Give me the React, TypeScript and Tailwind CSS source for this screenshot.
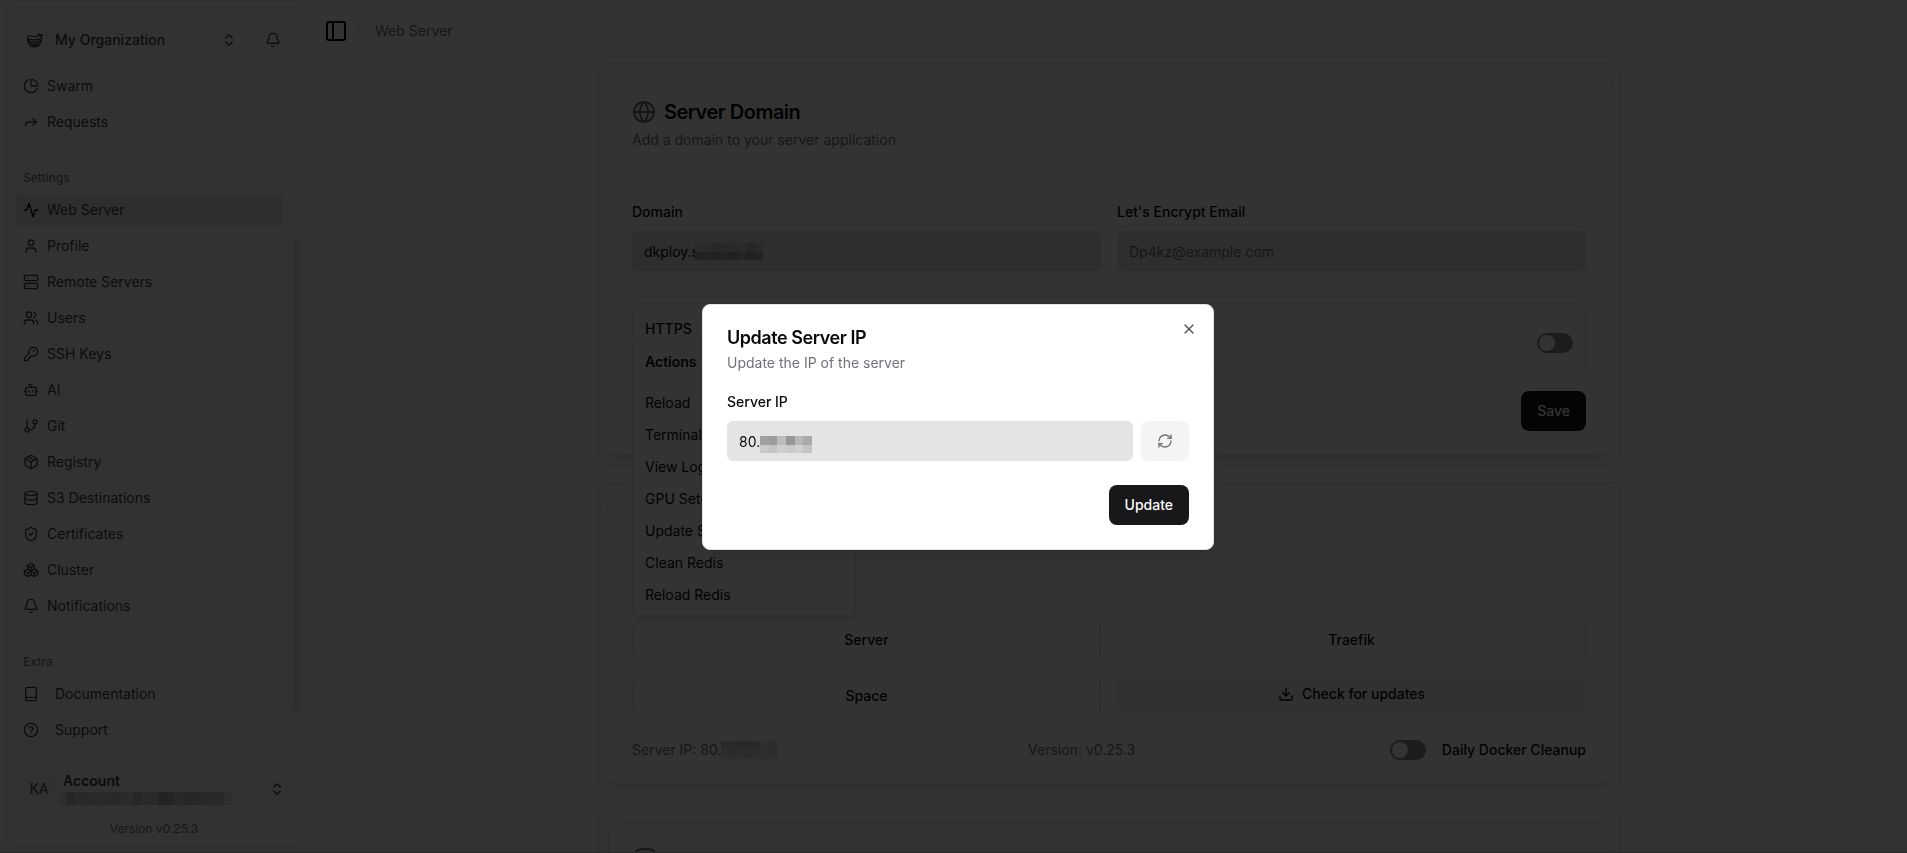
import { useState } from "react";
import type { ReactNode } from "react";
import {
  Activity,
  Bell,
  Book,
  Bot,
  Boxes,
  ChartPie,
  ChevronsUpDown,
  CircleHelp,
  Database,
  Download,
  Forward,
  GitBranch,
  Globe,
  KeyRound,
  Package,
  PanelLeft,
  RefreshCw,
  Server,
  ShieldCheck,
  User,
  Users,
  X,
} from "lucide-react";
import type { LucideIcon } from "lucide-react";

type NavItem = { title: string; icon: LucideIcon; active?: boolean };

const HOME: NavItem[] = [
  { title: "Swarm", icon: ChartPie },
  { title: "Requests", icon: Forward },
];

const SETTINGS: NavItem[] = [
  { title: "Web Server", icon: Activity, active: true },
  { title: "Profile", icon: User },
  { title: "Remote Servers", icon: Server },
  { title: "Users", icon: Users },
  { title: "SSH Keys", icon: KeyRound },
  { title: "AI", icon: Bot },
  { title: "Git", icon: GitBranch },
  { title: "Registry", icon: Package },
  { title: "S3 Destinations", icon: Database },
  { title: "Certificates", icon: ShieldCheck },
  { title: "Cluster", icon: Boxes },
  { title: "Notifications", icon: Bell },
];

const EXTRA: NavItem[] = [
  { title: "Documentation", icon: Book },
  { title: "Support", icon: CircleHelp },
];

const ACTIONS = [
  "Reload",
  "Terminal",
  "View Logs",
  "GPU Setup",
  "Update Server IP",
  "Clean Redis",
  "Reload Redis",
];

// Censor blocks, one array per row of cells
const DOMAIN_MASK = [
  ["bg-[#d2d2d2]", "bg-[#d2d2cd]", "bg-[#c3c3be]", "bg-[#cdcdcd]", "bg-[#cdcdcd]", "bg-[#d2d2d2]", "bg-[#bebebe]", "bg-[#cdcdcd]"],
  ["bg-[#a5a5a5]", "bg-[#b4b4b4]", "bg-[#a5a5a5]", "bg-[#afafaf]", "bg-[#a0a0a0]", "bg-[#b9b9b9]", "bg-[#a5a5a5]", "bg-[#afafaf]"],
];

const IP_MASK = [
  ["bg-[#a0a0a2]", "bg-[#9c9c9e]", "bg-[#bcbcbe]", "bg-[#979799]", "bg-[#b8b8ba]", "bg-[#a9a9ab]"],
  ["bg-[#cacacc]", "bg-[#c4c4c6]", "bg-[#cfcfd1]", "bg-[#cacacc]", "bg-[#d0d0d2]", "bg-[#c4c4c6]"],
];

const FOOTER_IP_MASK = [
  ["bg-[#cdcdcd]", "bg-[#d2d2d2]", "bg-[#c8cdd2]", "bg-[#cdcdd2]", "bg-[#cdd2d2]", "bg-[#ebebeb]", "bg-[#dcdcdc]"],
  ["bg-[#e6e6e6]", "bg-[#dcdcdc]", "bg-[#e1e1e1]", "bg-[#dcdcdc]", "bg-[#e1e1e1]", "bg-[#ebebeb]", "bg-[#e1e1e1]"],
];

const EMAIL_MASK = [
  [
    "bg-[#e6e6e6]", "bg-[#bebebe]", "bg-[#cdcdcd]", "bg-[#cdcdcd]", "bg-[#d2d2d2]", "bg-[#d2d2d2]", "bg-[#cdcdcd]",
    "bg-[#d2d2d2]", "bg-[#d7d7d7]", "bg-[#bebebe]", "bg-[#d2d2d2]", "bg-[#cdcdcd]", "bg-[#afafaf]", "bg-[#b4b4b4]",
    "bg-[#cdcdcd]", "bg-[#bebebe]", "bg-[#c3c3c3]", "bg-[#c8c8c8]", "bg-[#cdcdcd]", "bg-[#cdcdcd]", "bg-[#e6e6e6]",
  ],
];

function Mask({ rows, className }: { rows: string[][]; className: string }) {
  return (
    <span aria-hidden className={`flex flex-col ${className}`}>
      {rows.map((row, r) => (
        <span key={r} className="flex flex-1">
          {row.map((cell, c) => (
            <span key={c} className={`flex-1 ${cell}`} />
          ))}
        </span>
      ))}
    </span>
  );
}

function Logo() {
  return (
    <svg viewBox="0 0 32 30" className="h-[15px] w-4 text-black" fill="none" stroke="currentColor" strokeLinecap="round">
      <path d="M1 8 C1 3 5 5 8 6 C12 8 19 8 24 5.5" strokeWidth="1.8" />
      <path d="M1 8 C1 20 3 28 15 28 C26 28 29 18 29.500 8" strokeWidth="1.8" />
      <path d="M2 11 C9 15 21 15 28.500 10" strokeWidth="2" />
      <path d="M2.500 15 C9 19 21 19 28 14.500" strokeWidth="2" />
      <path d="M3.500 19 C9 23 21 23 26.500 18.500" strokeWidth="2" />
      <path d="M6 23.500 C11 26 19 26 24 23" strokeWidth="2" />
      <path d="M22 2 C24 2 26 3 27 5 C28 3 29.500 2.500 31 2.500 C30.500 5 29 7 26.500 7 C25 5.500 23.500 4 22 2Z" fill="currentColor" strokeWidth="1" />
    </svg>
  );
}

function NavGroup({ label, items, wide }: { label?: string; items: NavItem[]; wide?: boolean }) {
  return (
    <div className="flex flex-col px-2 pb-2">
      {label && (
        <div className="mt-2 flex h-8 items-center px-2 text-xs font-medium text-[#3f3f46]/70">{label}</div>
      )}
      <ul className="flex flex-col gap-1">
        {items.map(({ title, icon: Icon, active }) => (
          <li key={title}>
            <a
              href="#"
              className={`flex h-8 items-center rounded-md px-2 text-sm ${wide ? "gap-4" : "gap-2"} ${active ? "bg-[#e6e6e9]" : ""}`}
            >
              <Icon className={`size-4 shrink-0 ${active ? "text-black" : ""}`} />
              <span>{title}</span>
            </a>
          </li>
        ))}
      </ul>
    </div>
  );
}

function Sidebar() {
  return (
    <aside className="w-[311px] shrink-0 py-[7px] pl-1.5 pr-[9px]">
      <div className="flex h-full flex-col rounded-lg border border-[#e4e4e7] bg-[#fafafa] text-[#3f3f46] shadow-sm">
        <div className="flex items-center justify-between pb-1.5 pl-2 pr-3 pt-2">
          <button className="flex h-12 w-[230px] items-center gap-2 px-2 text-left">
            <span className="flex size-6 items-center justify-center rounded-sm border border-[#e4e4e7]">
              <Logo />
            </span>
            <span className="flex-1 text-sm font-medium">My Organization</span>
            <ChevronsUpDown className="size-4" />
          </button>
          <button aria-label="Notifications" className="flex size-8 items-center justify-center">
            <Bell className="size-4" />
          </button>
        </div>

        <div className="flex min-h-0 flex-1 overflow-hidden">
          <nav className="flex flex-1 flex-col gap-2">
            <NavGroup items={HOME} />
            <NavGroup label="Settings" items={SETTINGS} />
            <NavGroup label="Extra" items={EXTRA} wide />
          </nav>
          <div className="flex w-2.5 flex-col items-center pb-1 pt-1.5 text-[#e4e4e7]">
            <svg viewBox="0 0 6 4" className="w-1.5" fill="currentColor">
              <path d="M0 4 3 0 6 4Z" />
            </svg>
            <div className="mb-[30px] mt-auto h-[472px] w-1.5 rounded-full bg-[#e4e4e7]" />
            <svg viewBox="0 0 6 4" className="w-1.5" fill="currentColor">
              <path d="M0 0 3 4 6 0Z" />
            </svg>
          </div>
        </div>

        <div className="mt-2 flex flex-col gap-2 p-2">
          <button className="flex h-12 items-center gap-2 px-2 text-left">
            <span className="flex size-8 items-center justify-center rounded-lg bg-[#f4f4f5] text-sm">KA</span>
            <span className="relative flex-1 self-stretch pt-1.5">
              <span className="block text-sm leading-5 font-semibold">Account</span>
              <Mask rows={EMAIL_MASK} className="absolute -left-1 top-[27px] h-[13px] w-[173px]" />
            </span>
            <ChevronsUpDown className="size-4" />
          </button>
          <div className="text-center text-xs text-[#71717a]">Version v0.25.3</div>
        </div>
      </div>
    </aside>
  );
}

function Toggle({ id, className = "" }: { id: string; className?: string }) {
  return (
    <input
      id={id}
      type="checkbox"
      role="switch"
      className={`h-5 w-9 shrink-0 appearance-none rounded-full bg-[#8c8c92] p-0.5 before:block before:size-4 before:rounded-full before:bg-white before:shadow-lg checked:bg-[#18181b] checked:before:translate-x-4 ${className}`}
    />
  );
}

function Panel({ children, className = "shadow-md" }: { children?: ReactNode; className?: string }) {
  return (
    <section className="rounded-xl border border-[#e4e4e7] bg-[#fafafa] p-2.5">
      <div className={`rounded-xl bg-white ${className}`}>{children}</div>
    </section>
  );
}

const outlineButton =
  "flex h-10 w-full items-center justify-center rounded-lg border border-[#e4e4e7] bg-white text-sm font-medium";
const field = "h-10 w-full rounded-md bg-[#e4e4e7] px-3 text-sm outline-none placeholder:text-[#71717a]";
const fieldLabel = "text-sm leading-[26px] font-medium";

function DomainCard() {
  return (
    <Panel>
      <div className="flex flex-col gap-1 p-6">
        <h2 className="flex items-center gap-2 text-xl font-semibold tracking-tight">
          <Globe className="size-6 text-[#71717a]" />
          Server Domain
        </h2>
        <p className="text-sm text-[#71717a]">Add a domain to your server application.</p>
      </div>
      <form className="border-t border-[#e4e4e7] p-6" onSubmit={(e) => e.preventDefault()}>
        <div className="grid grid-cols-2 gap-4">
          <div className="flex flex-col gap-1.5">
            <label htmlFor="domain" className={fieldLabel}>
              Domain
            </label>
            <div className="relative">
              <input id="domain" defaultValue="dkploy.s" className={field} />
              <Mask rows={DOMAIN_MASK} className="absolute left-[63px] top-3 h-[17px] w-[68px]" />
            </div>
          </div>
          <div className="flex flex-col gap-1.5">
            <label htmlFor="email" className={fieldLabel}>
              Let's Encrypt Email
            </label>
            <input id="email" placeholder="Dp4kz@example.com" className={field} />
          </div>
        </div>
        <div className="mt-8 flex h-[72px] justify-between rounded-lg border border-[#e4e4e7] p-3">
          <label htmlFor="https" className={fieldLabel}>
            HTTPS
          </label>
          <Toggle id="https" className="mt-[17px]" />
        </div>
        <div className="mt-4 flex justify-end">
          <button className="h-10 rounded-lg bg-[#18181b] px-4 text-sm font-medium text-[#fafafa]">Save</button>
        </div>
      </form>
    </Panel>
  );
}

function ActionsMenu() {
  return (
    <div
      role="menu"
      className="absolute bottom-full left-0 z-10 mb-1 w-56 rounded-md border border-[#e4e4e7] bg-white p-1 text-sm shadow-md"
    >
      <div className="px-2 py-1.5 font-semibold">Actions</div>
      <div className="-mx-1 my-1 h-px bg-[#f4f4f5]" />
      {ACTIONS.map((action) => (
        <button key={action} role="menuitem" className="block w-full px-2 py-1.5 text-left">
          {action}
        </button>
      ))}
    </div>
  );
}

function ServerCard() {
  return (
    <Panel>
      <div className="h-[102px] p-6">
        <Server className="size-6 text-[#71717a]" />
      </div>
      <div className="border-t border-[#e4e4e7] p-6">
        <div className="grid grid-cols-2 items-start gap-4">
          <div className="relative">
            <button className={outlineButton}>Server</button>
            <ActionsMenu />
          </div>
          <button className={outlineButton}>Traefik</button>
          <button className={outlineButton}>Space</button>
          <button className="flex h-9 w-full items-center justify-center gap-2 rounded-lg bg-[#f4f4f5] text-sm font-medium">
            <Download className="size-4" />
            Check for updates
          </button>
        </div>
        <div className="mt-6 flex h-5 items-center justify-between text-sm text-[#71717a]">
          <span className="flex items-center">
            Server IP: 80.
            <Mask rows={FOOTER_IP_MASK} className="-mr-1 h-[18px] w-14" />
          </span>
          <span>Version: v0.25.3</span>
          <span className="flex items-center gap-4">
            <Toggle id="cleanup" />
            <label htmlFor="cleanup" className="font-medium text-[#09090b]">
              Daily Docker Cleanup
            </label>
          </span>
        </div>
      </div>
    </Panel>
  );
}

function UpdateIpDialog({ onClose }: { onClose: () => void }) {
  return (
    <div className="fixed inset-0 z-50 flex items-center justify-center border-b border-[#2e2a2b] bg-black/80 pl-[9px] pt-0.5">
      <div
        role="dialog"
        aria-labelledby="dialog-title"
        className="relative flex w-full max-w-lg flex-col rounded-lg border border-[#e4e4e7] bg-white p-6 shadow-lg"
      >
        <h2 id="dialog-title" className="text-lg leading-[18px] font-semibold tracking-tight">
          Update Server IP
        </h2>
        <p className="mt-1.5 text-sm text-[#71717a]">Update the IP of the server</p>
        <div className="mt-4 flex flex-col gap-1.5">
          <label htmlFor="server-ip" className={fieldLabel}>
            Server IP
          </label>
          <div className="flex gap-2">
            <div className="relative flex-1">
              <input id="server-ip" defaultValue="80." className={field} />
              <Mask rows={IP_MASK} className="absolute left-[33px] top-[15px] h-[17px] w-[52px]" />
            </div>
            <button aria-label="Detect IP" className="rounded-lg bg-[#f4f4f5] px-4 text-[#71717a]">
              <RefreshCw className="size-4" />
            </button>
          </div>
        </div>
        <div className="mt-6 flex justify-end">
          <button className="h-10 rounded-lg bg-[#18181b] px-4 text-sm font-medium text-[#fafafa]">Update</button>
        </div>
        <button aria-label="Close" onClick={onClose} className="absolute right-4 top-4 opacity-70">
          <X className="size-4" />
        </button>
      </div>
    </div>
  );
}

export default function App() {
  const [open, setOpen] = useState(true);

  return (
    <div className="flex h-screen overflow-hidden bg-white font-['Inter',sans-serif] text-[#09090b]">
      <Sidebar />
      <main className="min-w-0 flex-1">
        <header className="flex h-[63px] items-center pb-px pl-[13px]">
          <button aria-label="Toggle Sidebar">
            <PanelLeft className="size-6 text-black" />
          </button>
          <div className="ml-2.5 h-4 w-px bg-[#e4e4e7]" />
          <a href="#" className="ml-4 text-sm text-[#71717a]">
            Web Server
          </a>
        </header>
        <div className="mx-auto flex max-w-5xl flex-col gap-4">
          <DomainCard />
          <ServerCard />
          <Panel className="border border-[#e4e4e7]">
            <div className="p-6">
              <Database className="size-6 text-[#71717a]" />
            </div>
          </Panel>
        </div>
      </main>
      {open && <UpdateIpDialog onClose={() => setOpen(false)} />}
    </div>
  );
}
